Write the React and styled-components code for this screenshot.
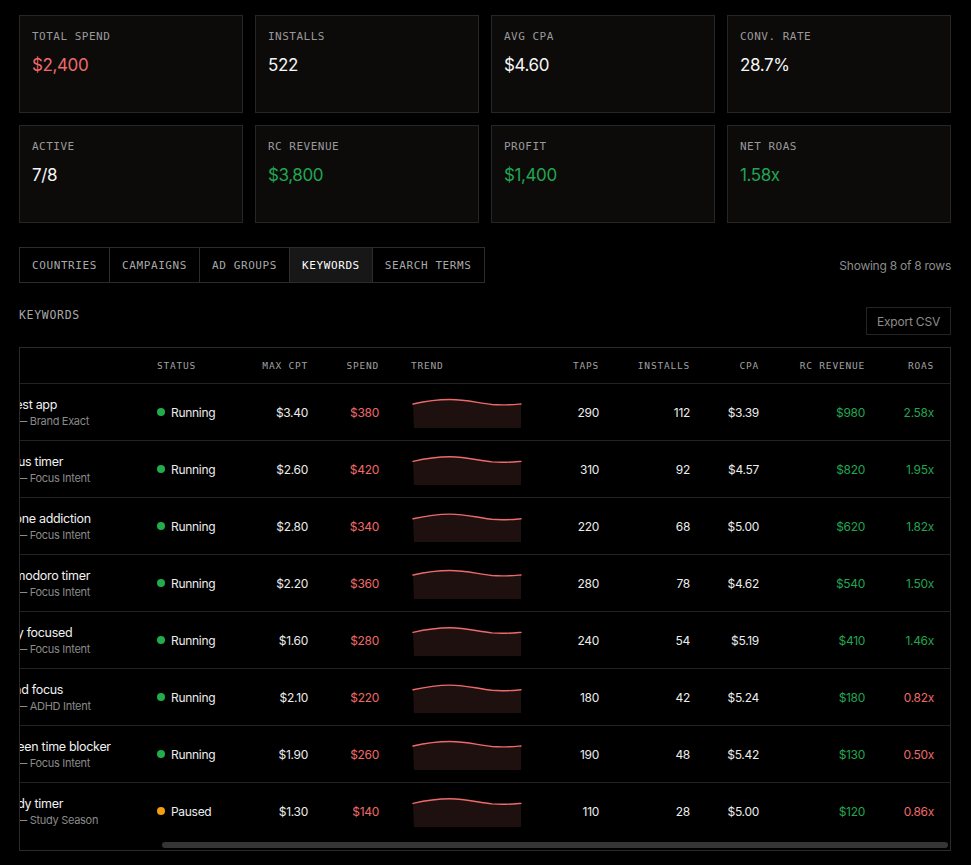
import React, { useLayoutEffect, useRef, useState } from "react";
import styled, { createGlobalStyle } from "styled-components";

const RED = "#ee6a6a";
const GREEN = "#22a552";
const MONO = `"DejaVu Sans Mono", "Liberation Mono", monospace`;

const GlobalStyle = createGlobalStyle`
  html, body { margin: 0; padding: 0; background: #000; }
  body { font-family: Inter, "Liberation Sans", sans-serif; color: #ededed; }
  * { box-sizing: border-box; }
`;

const Page = styled.div`
  padding: 15px 20px 14px 19px;
  display: flex;
  flex-direction: column;
`;

const StatsGrid = styled.div`
  display: grid;
  grid-template-columns: repeat(4, 1fr);
  gap: 12px;
`;

const Card = styled.div`
  height: 98px;
  border: 1px solid #262626;
  background: #0c0b0a;
  padding: 13px 12px 12px;
  display: flex;
  flex-direction: column;
  gap: 8px;
`;

const CardLabel = styled.div`
  font-family: ${MONO};
  font-size: 11px;
  line-height: 16px;
  letter-spacing: 0.5px;
  color: #9a9a9a;
`;

const CardValue = styled.div`
  font-size: 17px;
  line-height: 25px;
  letter-spacing: -0.4px;
  color: ${(p) => (p.$tone === "red" ? RED : p.$tone === "green" ? GREEN : "#f5f5f5")};
`;

const TabBar = styled.div`
  margin-top: 24px;
  display: flex;
  align-items: center;
  justify-content: space-between;
`;

const Tabs = styled.div`
  display: flex;
  border: 1px solid #2c2c2c;
`;

const Tab = styled.div`
  height: 34px;
  padding: 0 12px;
  display: flex;
  align-items: center;
  font-family: ${MONO};
  font-size: 11px;
  letter-spacing: 0.6px;
  color: ${(p) => (p.$active ? "#ffffff" : "#a8a8a8")};
  background: ${(p) => (p.$active ? "#171717" : "transparent")};
  border-right: 1px solid #2c2c2c;
  &:last-child { border-right: none; }
`;

const RowCount = styled.div`
  font-size: 12px;
  letter-spacing: -0.25px;
  color: #8c8c8c;
`;

const SectionHead = styled.div`
  margin-top: 24px;
  display: flex;
  align-items: flex-start;
  justify-content: space-between;
`;

const SectionTitle = styled.div`
  font-family: ${MONO};
  font-size: 11.5px;
  line-height: 16px;
  letter-spacing: 0.7px;
  color: #a8a8a8;
`;

const ExportButton = styled.button`
  height: 28px;
  padding: 0 10px;
  border: 1px solid #242424;
  background: transparent;
  color: #8c8c8c;
  font-family: Inter, "Liberation Sans", sans-serif;
  font-size: 12px;
  letter-spacing: -0.2px;
`;

const TableWrap = styled.div`
  margin-top: 12px;
  border: 1px solid #2a2a2a;
  display: flex;
  flex-direction: column;
`;

const Scroller = styled.div`
  overflow-x: auto;
  scrollbar-width: none;
  &::-webkit-scrollbar { display: none; }
`;

const ScrollTrack = styled.div`
  height: 11px;
  padding-top: 3px;
  display: flex;
`;

const ScrollThumb = styled.div`
  height: 6px;
  border-radius: 3px;
  background: #353535;
`;

const COLS = "129px 157px 94px 89px 71px 140px 80px 91px 69px 106px 69px";

const Grid = styled.div`
  width: 1095px;
  display: grid;
  grid-template-columns: ${COLS};
  align-items: center;
  border-bottom: 1px solid #222;
  height: ${(p) => (p.$head ? "36px" : "57px")};
  &:last-child { border-bottom: none; height: 56px; }
`;

const HeadCell = styled.div`
  padding: 0 16px;
  font-family: ${MONO};
  font-size: 9.5px;
  letter-spacing: 0.8px;
  color: #a0a0a0;
  text-align: ${(p) => (p.$right ? "right" : "left")};
  white-space: nowrap;
`;

const Cell = styled.div`
  padding: 0 16px;
  font-size: 12px;
  letter-spacing: -0.3px;
  white-space: nowrap;
  text-align: ${(p) => (p.$right ? "right" : "left")};
  color: ${(p) => (p.$tone === "red" ? RED : p.$tone === "green" ? GREEN : "#ececec")};
`;

const KeywordName = styled.div`
  font-size: 12.5px;
  line-height: 16px;
  color: #f0f0f0;
`;

const KeywordSub = styled.div`
  font-size: 11px;
  line-height: 14px;
  margin-top: 1px;
  color: #8a8a8a;
`;

const Status = styled.div`
  display: flex;
  align-items: center;
  gap: 6px;
`;

const Dot = styled.span`
  width: 8px;
  height: 8px;
  border-radius: 50%;
  background: ${(p) => (p.$paused ? "#f59e0b" : "#1fae4b")};
`;

const Select = styled.span`
  display: inline-block;
  width: 12px;
  height: 12px;
  border: 1px solid #333;
  border-radius: 2px;
`;

const SparkBox = styled.svg`
  display: block;
  margin-left: 1px;
`;

function Spark({ seed }) {
  const a = 8 + (seed % 3) * 0.4;
  const p = 3.5 + ((seed * 7) % 3) * 0.3;
  const path = `M1,${a} C14,${a - 3} 26,${p} 38,${p} C54,${p} 66,${a - 1} 80,${a + 0.5} C92,${a + 1.5} 100,${a + 0.7} 109,${a}`;
  return (
    <SparkBox width="110" height="32" viewBox="0 0 110 32">
      <path d={`${path} L109,32 L2,32 Z`} fill="#1f1010" />
      <path d={path} fill="none" stroke="#ee6a6a" strokeWidth="1.4" strokeLinecap="round" />
    </SparkBox>
  );
}

const stats = [
  { label: "TOTAL SPEND", value: "$2,400", tone: "red" },
  { label: "INSTALLS", value: "522" },
  { label: "AVG CPA", value: "$4.60" },
  { label: "CONV. RATE", value: "28.7%" },
  { label: "ACTIVE", value: "7/8" },
  { label: "RC REVENUE", value: "$3,800", tone: "green" },
  { label: "PROFIT", value: "$1,400", tone: "green" },
  { label: "NET ROAS", value: "1.58x", tone: "green" },
];

const tabs = ["COUNTRIES", "CAMPAIGNS", "AD GROUPS", "KEYWORDS", "SEARCH TERMS"];

const rows = [
  ["forest app", "Brand Exact", false, "$3.40", "$380", 290, 112, "$3.39", "$980", "2.58x"],
  ["focus timer", "Focus Intent", false, "$2.60", "$420", 310, 92, "$4.57", "$820", "1.95x"],
  ["phone addiction", "Focus Intent", false, "$2.80", "$340", 220, 68, "$5.00", "$620", "1.82x"],
  ["pomodoro timer", "Focus Intent", false, "$2.20", "$360", 280, 78, "$4.62", "$540", "1.50x"],
  ["stay focused", "Focus Intent", false, "$1.60", "$280", 240, 54, "$5.19", "$410", "1.46x"],
  ["adhd focus", "ADHD Intent", false, "$2.10", "$220", 180, 42, "$5.24", "$180", "0.82x"],
  ["screen time blocker", "Focus Intent", false, "$1.90", "$260", 190, 48, "$5.42", "$130", "0.50x"],
  ["study timer", "Study Season", true, "$1.30", "$140", 110, 28, "$5.00", "$120", "0.86x"],
];

export default function App() {
  const ref = useRef(null);
  const [thumb, setThumb] = useState({ left: 142, width: 786 });
  useLayoutEffect(() => {
    const el = ref.current;
    if (!el) return;
    el.scrollLeft = el.scrollWidth;
    const track = el.clientWidth;
    const w = (el.clientWidth / el.scrollWidth) * track;
    const l = (el.scrollLeft / el.scrollWidth) * track;
    setThumb({ left: l + 2, width: w - 4 });
  }, []);
  return (
    <>
      <GlobalStyle />
      <Page>
        <StatsGrid>
          {stats.map((s) => (
            <Card key={s.label}>
              <CardLabel>{s.label}</CardLabel>
              <CardValue $tone={s.tone}>{s.value}</CardValue>
            </Card>
          ))}
        </StatsGrid>

        <TabBar>
          <Tabs>
            {tabs.map((t) => (
              <Tab key={t} $active={t === "KEYWORDS"}>{t}</Tab>
            ))}
          </Tabs>
          <RowCount>Showing 8 of 8 rows</RowCount>
        </TabBar>

        <SectionHead>
          <SectionTitle>KEYWORDS</SectionTitle>
          <ExportButton>Export CSV</ExportButton>
        </SectionHead>

        <TableWrap>
          <Scroller ref={ref}>
            <Grid $head>
              <HeadCell></HeadCell>
              <HeadCell></HeadCell>
              <HeadCell>STATUS</HeadCell>
              <HeadCell $right>MAX CPT</HeadCell>
              <HeadCell $right>SPEND</HeadCell>
              <HeadCell>TREND</HeadCell>
              <HeadCell $right>TAPS</HeadCell>
              <HeadCell $right>INSTALLS</HeadCell>
              <HeadCell $right>CPA</HeadCell>
              <HeadCell $right>RC REVENUE</HeadCell>
              <HeadCell $right>ROAS</HeadCell>
            </Grid>
            {rows.map((r, i) => {
              const roasTone = parseFloat(r[9]) >= 1 ? "green" : "red";
              return (
                <Grid key={r[0]}>
                  <Cell><Select /></Cell>
                  <Cell>
                    <KeywordName>{r[0]}</KeywordName>
                    <KeywordSub>EX — {r[1]}</KeywordSub>
                  </Cell>
                  <Cell>
                    <Status>
                      <Dot $paused={r[2]} />
                      {r[2] ? "Paused" : "Running"}
                    </Status>
                  </Cell>
                  <Cell $right>{r[3]}</Cell>
                  <Cell $right $tone="red">{r[4]}</Cell>
                  <Cell><Spark seed={i} /></Cell>
                  <Cell $right>{r[5]}</Cell>
                  <Cell $right>{r[6]}</Cell>
                  <Cell $right>{r[7]}</Cell>
                  <Cell $right $tone="green">{r[8]}</Cell>
                  <Cell $right $tone={roasTone}>{r[9]}</Cell>
                </Grid>
              );
            })}
          </Scroller>
          <ScrollTrack>
            <ScrollThumb style={{ marginLeft: thumb.left, width: thumb.width }} />
          </ScrollTrack>
        </TableWrap>
      </Page>
    </>
  );
}
